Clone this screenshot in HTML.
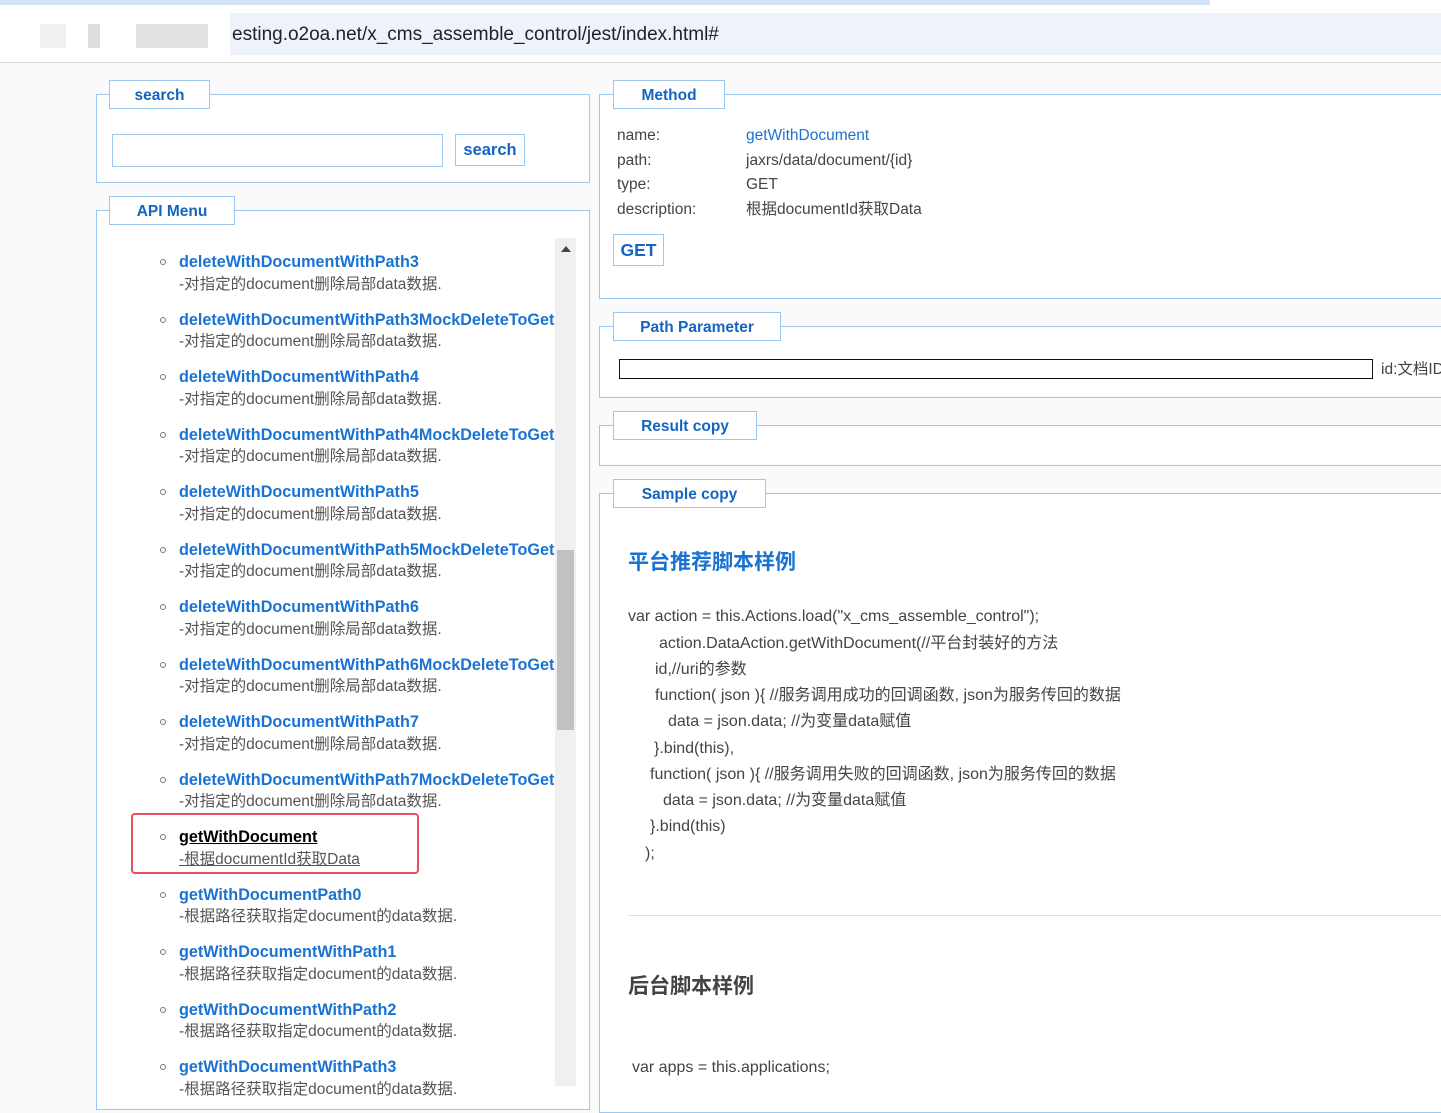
<!DOCTYPE html>
<html><head><meta charset="utf-8">
<style>
*{margin:0;padding:0;box-sizing:border-box}
body{width:1441px;height:1086px;overflow:hidden;background:#fafafa;font-family:"Liberation Sans","Noto Sans CJK SC",sans-serif;position:relative;color:#444}
.a{position:absolute;white-space:nowrap}
.fs{position:absolute;border:1px solid #9cc8ef;background:#fff}
.lg{position:absolute;border:1px solid #9cc8ef;background:#fff;color:#1565c0;font-weight:bold;font-size:15.5px;text-align:center;height:29px;line-height:29px}
.t{position:absolute;left:179px;font-size:16.2px;font-weight:bold;color:#1a73d2;white-space:nowrap;line-height:18px}
.d{position:absolute;left:179px;font-size:15.5px;color:#555;white-space:nowrap;line-height:18px}
.b{position:absolute;left:160px;width:6px;height:6px;border:1px solid #777;border-radius:50%}
.k{position:absolute;font-size:15.5px;color:#444;line-height:18px;white-space:nowrap}
.code{position:absolute;font-size:16px;color:#444;line-height:18px;white-space:nowrap}
</style></head><body>
<div class="a" style="left:0;top:0;width:1441px;height:63px;background:#fff;border-bottom:1px solid #ddd"></div>
<div class="a" style="left:0;top:0;width:1210px;height:5px;background:#d5e3f7"></div>
<div class="a" style="left:230px;top:13px;width:1211px;height:42px;background:#eef2fa"></div>
<div class="a" style="left:40px;top:24px;width:26px;height:24px;background:#f0f0f0"></div>
<div class="a" style="left:88px;top:24px;width:12px;height:24px;background:#ddd"></div>
<div class="a" style="left:136px;top:24px;width:72px;height:24px;background:#e2e2e2"></div>
<div class="a" style="left:232px;top:23px;font-size:19px;color:#222;line-height:24px">esting.o2oa.net/x_cms_assemble_control/jest/index.html#</div>

<div class="fs" style="left:96px;top:94px;width:494px;height:89px"></div>
<div class="lg" style="left:109px;top:80px;width:101px">search</div>
<div class="a" style="left:112px;top:134px;width:331px;height:33px;border:1px solid #9cc8ef;background:#fff"></div>
<div class="lg" style="left:455px;top:134px;width:70px;height:32px;line-height:31px;font-size:16.5px">search</div>

<div class="fs" style="left:96px;top:210px;width:494px;height:900px"></div>
<div class="lg" style="left:109px;top:196px;width:126px">API Menu</div>
<div class="a" style="left:555px;top:238px;width:21px;height:848px;background:#f0f0f0"></div>
<div class="a" style="left:561px;top:246px;width:0;height:0;border-left:5px solid transparent;border-right:5px solid transparent;border-bottom:6px solid #444"></div>
<div class="a" style="left:557px;top:550px;width:17px;height:180px;background:#c1c1c1"></div>

<div class="b" style="top:259px"></div><div class="t" style="top:253px">deleteWithDocumentWithPath3</div><div class="d" style="top:276px">-对指定的document删除局部data数据.</div>
<div class="b" style="top:317px"></div><div class="t" style="top:311px">deleteWithDocumentWithPath3MockDeleteToGet</div><div class="d" style="top:333px">-对指定的document删除局部data数据.</div>
<div class="b" style="top:374px"></div><div class="t" style="top:368px">deleteWithDocumentWithPath4</div><div class="d" style="top:391px">-对指定的document删除局部data数据.</div>
<div class="b" style="top:432px"></div><div class="t" style="top:426px">deleteWithDocumentWithPath4MockDeleteToGet</div><div class="d" style="top:448px">-对指定的document删除局部data数据.</div>
<div class="b" style="top:489px"></div><div class="t" style="top:483px">deleteWithDocumentWithPath5</div><div class="d" style="top:506px">-对指定的document删除局部data数据.</div>
<div class="b" style="top:547px"></div><div class="t" style="top:541px">deleteWithDocumentWithPath5MockDeleteToGet</div><div class="d" style="top:563px">-对指定的document删除局部data数据.</div>
<div class="b" style="top:604px"></div><div class="t" style="top:598px">deleteWithDocumentWithPath6</div><div class="d" style="top:621px">-对指定的document删除局部data数据.</div>
<div class="b" style="top:662px"></div><div class="t" style="top:656px">deleteWithDocumentWithPath6MockDeleteToGet</div><div class="d" style="top:678px">-对指定的document删除局部data数据.</div>
<div class="b" style="top:719px"></div><div class="t" style="top:713px">deleteWithDocumentWithPath7</div><div class="d" style="top:736px">-对指定的document删除局部data数据.</div>
<div class="b" style="top:777px"></div><div class="t" style="top:771px">deleteWithDocumentWithPath7MockDeleteToGet</div><div class="d" style="top:793px">-对指定的document删除局部data数据.</div>
<div class="b" style="top:834px"></div><div class="t" style="top:828px;color:#000;text-decoration:underline">getWithDocument</div><div class="d" style="top:851px;text-decoration:underline">-根据documentId获取Data</div>
<div class="b" style="top:892px"></div><div class="t" style="top:886px">getWithDocumentPath0</div><div class="d" style="top:908px">-根据路径获取指定document的data数据.</div>
<div class="b" style="top:949px"></div><div class="t" style="top:943px">getWithDocumentWithPath1</div><div class="d" style="top:966px">-根据路径获取指定document的data数据.</div>
<div class="b" style="top:1007px"></div><div class="t" style="top:1001px">getWithDocumentWithPath2</div><div class="d" style="top:1023px">-根据路径获取指定document的data数据.</div>
<div class="b" style="top:1064px"></div><div class="t" style="top:1058px">getWithDocumentWithPath3</div><div class="d" style="top:1081px">-根据路径获取指定document的data数据.</div>
<div class="a" style="left:131px;top:813px;width:288px;height:61px;border:2px solid #e8505b;border-radius:4px"></div>

<div class="fs" style="left:599px;top:94px;width:860px;height:205px"></div>
<div class="lg" style="left:613px;top:80px;width:112px">Method</div>
<div class="k" style="left:617px;top:127px">name:</div><div class="k" style="left:746px;top:127px;color:#1a73d2">getWithDocument</div>
<div class="k" style="left:617px;top:152px">path:</div><div class="k" style="left:746px;top:152px">jaxrs/data/document/{id}</div>
<div class="k" style="left:617px;top:176px">type:</div><div class="k" style="left:746px;top:176px">GET</div>
<div class="k" style="left:617px;top:201px">description:</div><div class="k" style="left:746px;top:201px">根据documentId获取Data</div>
<div class="lg" style="left:613px;top:234px;width:51px;height:32px;line-height:31px;font-size:17.5px">GET</div>

<div class="fs" style="left:599px;top:326px;width:860px;height:72px"></div>
<div class="lg" style="left:613px;top:312px;width:168px">Path Parameter</div>
<div class="a" style="left:619px;top:359px;width:754px;height:20px;border:1px solid #111;background:#fff"></div>
<div class="k" style="left:1381px;top:361px">id:文档ID</div>

<div class="fs" style="left:599px;top:425px;width:860px;height:41px"></div>
<div class="lg" style="left:613px;top:411px;width:144px">Result copy</div>

<div class="fs" style="left:599px;top:493px;width:860px;height:620px"></div>
<div class="lg" style="left:613px;top:479px;width:153px">Sample copy</div>
<div class="a" style="left:628px;top:550px;font-size:21px;font-weight:bold;color:#1a73d2;line-height:26px">平台推荐脚本样例</div>
<div class="code" style="left:628px;top:608px">var action = this.Actions.load("x_cms_assemble_control");</div>
<div class="code" style="left:659px;top:635px">action.DataAction.getWithDocument(//平台封装好的方法</div>
<div class="code" style="left:655px;top:661px">id,//uri的参数</div>
<div class="code" style="left:655px;top:687px">function( json ){ //服务调用成功的回调函数, json为服务传回的数据</div>
<div class="code" style="left:668px;top:713px">data = json.data; //为变量data赋值</div>
<div class="code" style="left:654px;top:740px">}.bind(this),</div>
<div class="code" style="left:650px;top:766px">function( json ){ //服务调用失败的回调函数, json为服务传回的数据</div>
<div class="code" style="left:663px;top:792px">data = json.data; //为变量data赋值</div>
<div class="code" style="left:650px;top:818px">}.bind(this)</div>
<div class="code" style="left:645px;top:845px">);</div>
<div class="a" style="left:628px;top:915px;width:813px;height:1px;background:#e2e2e2"></div>
<div class="a" style="left:628px;top:974px;font-size:21px;font-weight:bold;color:#444;line-height:26px">后台脚本样例</div>
<div class="code" style="left:632px;top:1059px">var apps = this.applications;</div>
</body></html>
